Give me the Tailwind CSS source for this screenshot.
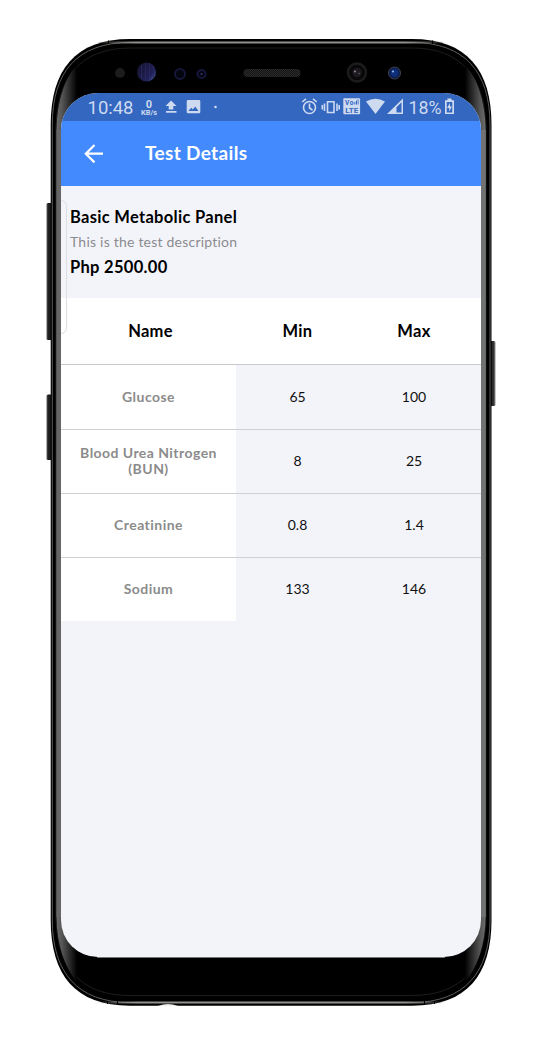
<!DOCTYPE html>
<html lang="en">
<head>
<meta charset="utf-8">
<title>Test Details</title>
<script src="https://cdn.jsdelivr.net/npm/@tailwindcss/browser@4"></script>
</head>
<body class="bg-white">
<div class="relative isolate h-[1051px] w-[542px] overflow-hidden bg-white pt-[93px] pl-[61px] font-['Lato','Liberation_Sans',sans-serif]">
  <!-- phone body -->
  <svg class="absolute inset-0 -z-10" width="542" height="1051" viewBox="0 0 542 1051" fill="none">
    <defs>
      <linearGradient id="edgeL" x1="54" x2="77" y1="0" y2="0" gradientUnits="userSpaceOnUse"><stop stop-color="#777"/><stop offset=".35" stop-color="#555"/><stop offset="1" stop-color="#000"/></linearGradient>
      <linearGradient id="edgeR" x1="488" x2="465" y1="0" y2="0" gradientUnits="userSpaceOnUse"><stop stop-color="#777"/><stop offset=".35" stop-color="#555"/><stop offset="1" stop-color="#000"/></linearGradient>
      <linearGradient id="btnL" x1="46" x2="52" y1="0" y2="0" gradientUnits="userSpaceOnUse"><stop stop-color="#777"/><stop offset=".35" stop-color="#222"/><stop offset="1" stop-color="#111"/></linearGradient>
      <linearGradient id="btnR" x1="496" x2="490" y1="0" y2="0" gradientUnits="userSpaceOnUse"><stop stop-color="#aaa"/><stop offset=".4" stop-color="#333"/><stop offset="1" stop-color="#111"/></linearGradient>
      <linearGradient id="shine" x1="95" x2="447" y1="0" y2="0" gradientUnits="userSpaceOnUse"><stop stop-color="#92928e" stop-opacity="0"/><stop offset=".12" stop-color="#92928e"/><stop offset=".88" stop-color="#92928e"/><stop offset="1" stop-color="#92928e" stop-opacity="0"/></linearGradient>
      <pattern id="mesh" width="2" height="2" patternUnits="userSpaceOnUse"><rect width="2" height="2" fill="#151515"/><rect width="1" height="1" fill="#2b2b2b"/><rect x="1" y="1" width="1" height="1" fill="#2b2b2b"/></pattern>
      <linearGradient id="lens" x1="137" x2="156" y1="66" y2="80" gradientUnits="userSpaceOnUse"><stop stop-color="#15152f"/><stop offset=".7" stop-color="#20205a"/><stop offset="1" stop-color="#4a63a8"/></linearGradient>
    </defs>
    <rect x="46.500" y="203" width="7" height="137" rx="1.500" fill="url(#btnL)"/>
    <rect x="46.500" y="394.500" width="7" height="65.500" rx="1.500" fill="url(#btnL)"/>
    <rect x="489" y="341" width="6.500" height="65" rx="1.500" fill="url(#btnR)"/>
    <path d="M50.700 125C50.700 70 75 39 130 39H412C467 39 491.500 70 491.500 125V920C491.500 975 467 1005.700 412 1005.700H130C75 1005.700 50.700 975 50.700 920Z" fill="#000"/>
    <path d="M52.300 125C52.300 72 77 42.500 130 42.500H412C465 42.500 490 72 490 125V920C490 972 465 1002.500 412 1002.500H130C77 1002.500 52.300 972 52.300 920Z" stroke="#5c5c5a"/>
    <path d="M95 41.600H447V43.400H95ZM95 1001.600H447V1003.400H95Z" fill="url(#shine)"/>
    <path d="M56 128C57 78 80 48 130 48H412C462 48 485 78 486 128V917C485 967 462 995.500 412 995.500H130C80 995.500 57 967 56 917Z" stroke="#1d1d1d"/>
    <path d="M56.500 130C57 100 65 78 77 65V982C65 968 57 946 56.500 917Z" fill="url(#edgeL)"/>
    <path d="M485.700 130C485 100 477 78 465 65V982C477 968 485 946 485.700 917Z" fill="url(#edgeR)"/>
    <path d="M56.500 130H61V917H56.500Z" fill="#666"/><path d="M481 130H485.700V917H481Z" fill="#707371"/>
    <path d="M108.500 40.500V44M432.500 40.500V44M107.500 1001V1004M117.500 1001V1004M424.500 1001V1004M434.500 1001V1004" stroke="#000"/>
    <path d="M97 957.500H445" stroke="#777"/>
    <path d="M158 1006Q168 1002 178 1006Z" fill="#eee"/>
    <circle cx="120" cy="73" r="5" fill="#1d1b1d"/>
    <circle cx="146.500" cy="72" r="9.500" fill="url(#lens)"/>
    <path d="M141.500 65V79M145.500 63V81M149.500 63V81M153.500 66V78" stroke="#2a2a5c" stroke-width=".8"/>
    <circle cx="180" cy="74" r="5" fill="#05050f" stroke="#16163a" stroke-width="2"/>
    <circle cx="201.500" cy="74" r="4" fill="#05050f" stroke="#16163a" stroke-width="2"/><circle cx="201.500" cy="74" r="1" fill="#3a3a70"/>
    <rect x="243.500" y="69" width="57" height="8" rx="4" fill="url(#mesh)"/>
    <circle cx="357" cy="72.500" r="9" fill="#080808" stroke="#1c1c1c" stroke-width="2.500"/>
    <circle cx="357" cy="72.500" r="4.800" fill="#1d1921"/><circle cx="355" cy="71.500" r="1.100" fill="#8a8290"/><circle cx="359" cy="73.500" r=".8" fill="#5f5965"/>
    <circle cx="394.500" cy="73" r="6" fill="#0b1c48" stroke="#3d4350"/>
    <circle cx="394.500" cy="73" r="4" fill="#0f2f78"/><circle cx="393" cy="71.500" r="1.100" fill="#8fb4ee"/>
  </svg>

  <main class="relative flex h-[864px] w-[420px] flex-col overflow-hidden rounded-[37px] bg-[#f3f4fa]">
    <!-- status bar -->
    <div class="flex h-7 shrink-0 bg-[#3367c0] text-[#cedaf0]">
      <svg width="420" height="28" viewBox="61 93 420 28" fill="#cedaf0" font-family="Roboto, sans-serif">
        <text x="87.500" y="114" font-size="18.500" textLength="46" lengthAdjust="spacingAndGlyphs">10:48</text>
        <text x="149" y="107.500" font-size="11" font-weight="700" text-anchor="middle">0</text>
        <text x="141" y="115" font-size="7" font-weight="700" textLength="16" lengthAdjust="spacingAndGlyphs">KB/s</text>
        <path d="M171 100.500L176.500 106H173.300V109.500H168.700V106H165.500ZM166 111H176.500V112.700H166Z"/>
        <path fill-rule="evenodd" d="M188 100H199Q200.300 100 200.300 101.300V112Q200.300 113.300 199 113.300H188Q186.700 113.300 186.700 112V101.300Q186.700 100 188 100ZM188.500 111H198.500L195.200 106.500L192.800 109.600L191.200 107.700Z"/>
        <circle cx="215.500" cy="107" r="1.300"/>
        <g fill="none" stroke="#cedaf0" stroke-width="1.600"><circle cx="309.500" cy="107.500" r="6"/><path d="M309.500 103.500V108L312.500 110M302.200 102L306 98.800M316.800 102L313 98.800"/><path d="M327.500 101.700H334V112.500H327.500ZM324.500 103.500V111M322.300 105V109.500M337 103.500V111M339.200 105V109.500"/></g>
        <rect x="343.300" y="98.300" width="16.800" height="16" rx="1"/>
        <g fill="#3367c0" font-weight="700"><text x="345" y="105" font-size="6.500" textLength="8.500">Vo</text><text x="345.300" y="113.200" font-size="8" textLength="13" lengthAdjust="spacingAndGlyphs">LTE</text><path d="M354.300 102H355.300V104.500H354.300ZM356 100.500H357V104.500H356ZM357.700 99.500H358.500V104.500H357.700Z"/></g>
        <path d="M366 101.500Q375.500 96 385 101.500L375.500 114Z"/>
        <path fill-rule="evenodd" d="M387 114L403 98.500V114ZM396.500 112.500H401.500V102.300L396.500 107.200Z"/>
        <text x="408.500" y="114" font-size="18" textLength="33" lengthAdjust="spacingAndGlyphs">18%</text>
        <path fill-rule="evenodd" d="M447.500 99V98.500H451.500V100.300H454V114H445V100.300H447.500ZM446.700 102V112.400H452.300V102ZM450 103L447 108H449.200V111.500L452 106.500H450Z"/>
      </svg>
    </div>
    <!-- app bar -->
    <header class="flex h-[65px] shrink-0 items-center bg-[#448aff] pl-[23px] text-white">
      <svg width="20" height="20" viewBox="0 0 20 20" fill="none" stroke="currentColor" stroke-width="2.200"><path d="M19 9.700H2M10.500 1L1.800 9.700L10.500 18.400"/></svg>
      <h1 class="ml-[41px] text-[19px] font-bold tracking-[.35px]">Test Details</h1>
    </header>
    <section class="h-[112px] shrink-0 pt-[19px] pl-[9px] whitespace-nowrap text-black">
      <h2 class="h-[24px] text-[16.500px] leading-6 font-bold tracking-[.3px]">Basic Metabolic Panel</h2>
      <p class="h-[26px] text-[14px] leading-[26px] tracking-[.22px] text-[#8b8b8e]">This is the test description</p>
      <p class="h-6 text-[16.500px] leading-6 font-bold tracking-[.3px]">Php 2500.00</p>
    </section>
    <!-- reference ranges -->
    <table class="w-full shrink-0 table-fixed border-collapse text-center text-[14px] leading-4 text-[#111]">
      <colgroup><col class="w-[175px]"><col class="w-[123px]"><col class="w-[122px]"></colgroup>
      <thead><tr class="h-[66px] border-b border-[#c8c9cc] bg-white text-[16.500px] tracking-[.3px] text-black"><th class="pl-1">Name</th><th>Min</th><th class="pr-3">Max</th></tr></thead>
      <tbody>
        <tr class="h-[65px] border-b border-[#cfd0d5]"><td class="bg-white font-bold tracking-[.45px] text-[#8b8b8b]">Glucose</td><td>65</td><td class="pr-3">100</td></tr>
        <tr class="h-[64px] border-b border-[#cfd0d5]"><td class="bg-white font-bold tracking-[.45px] text-[#8b8b8b]">Blood Urea Nitrogen<br>(BUN)</td><td>8</td><td class="pr-3">25</td></tr>
        <tr class="h-[64px] border-b border-[#cfd0d5]"><td class="bg-white font-bold tracking-[.45px] text-[#8b8b8b]">Creatinine</td><td>0.8</td><td class="pr-3">1.4</td></tr>
        <tr class="h-[64px]"><td class="bg-white font-bold tracking-[.45px] text-[#8b8b8b]">Sodium</td><td>133</td><td class="pr-3">146</td></tr>
      </tbody>
    </table>
    <!-- edge panel handle -->
    <div class="absolute top-[107px] -left-2 h-[134px] w-[14px] rounded-md border border-[#dddde2]"></div>
  </main>
</div>
</body>
</html>
